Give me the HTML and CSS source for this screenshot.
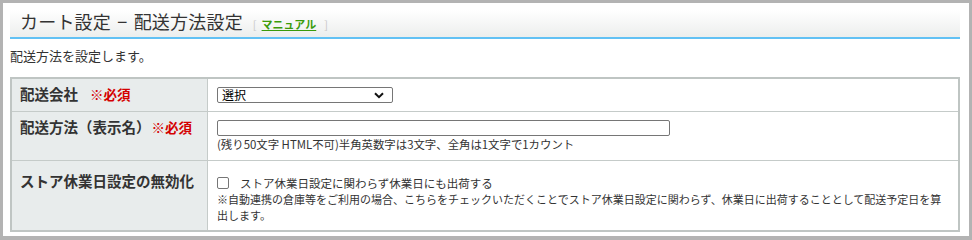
FILE: index.html
```html
<!DOCTYPE html>
<html lang="ja">
<head>
<meta charset="utf-8">
<title>カート設定 − 配送方法設定</title>
<link rel="stylesheet" href="styles.css">
</head>
<body>
<div class="page">
  <div class="head">
    <h1 class="title">カート設定 − 配送方法設定</h1>
    <span class="manual"><span class="br">[</span><a class="manual-link" href="#">マニュアル</a><span class="br">]</span></span>
  </div>
  <p class="desc">配送方法を設定します。</p>
  <table class="form">
    <tr class="row row-1">
      <th class="label">配送会社<span class="req">※必須</span></th>
      <td class="value">
        <span class="select-wrap">
          <select class="select"><option>選択</option></select>
          <svg class="chev" width="10" height="7" viewBox="0 0 10 7"><path d="M1 1.2 L5 5.2 L9 1.2" fill="none" stroke="#111" stroke-width="2"/></svg>
        </span>
      </td>
    </tr>
    <tr class="row row-2">
      <th class="label">配送方法（表示名）<span class="req req-2">※必須</span></th>
      <td class="value">
        <input class="text" type="text">
        <div class="hint">(残り50文字 HTML不可)半角英数字は3文字、全角は1文字で1カウント</div>
      </td>
    </tr>
    <tr class="row row-3">
      <th class="label label-3">ストア休業日設定の無効化</th>
      <td class="value">
        <label class="check-line"><input class="check" type="checkbox"><span>ストア休業日設定に関わらず休業日にも出荷する</span></label>
        <div class="note">※自動連携の倉庫等をご利用の場合、こちらをチェックいただくことでストア休業日設定に関わらず、休業日に出荷することとして配送予定日を算出します。</div>
      </td>
    </tr>
  </table>
</div>
</body>
</html>
```

FILE: styles.css
```css
html, body {
  margin: 0;
  padding: 0;
  background: #fff;
}
body {
  font-family: "Noto Sans CJK JP", "Noto Sans", sans-serif;
  color: #333;
}
.page {
  box-sizing: border-box;
  width: 972px;
  height: 240px;
  overflow: hidden;
  border-style: solid;
  border-color: #b3b3b3;
  border-width: 3px 3px 4px 3px;
  padding: 7px 9px 0 7px;
}
.head {
  height: 27px;
  border-bottom: 2px solid #62c1f4;
  background: linear-gradient(#ffffff, #eceeed);
  display: flex;
  align-items: baseline;
  padding-left: 10px;
}
.title {
  margin: 0;
  font-size: 18px;
  font-weight: normal;
  line-height: 23px;
  color: #333;
  word-spacing: 2px;
  letter-spacing: 0.2px;
}
.manual {
  margin-left: 10px;
  font-size: 11px;
  display: flex;
  align-items: baseline;
}
.br {
  color: #c8c8c8;
  font-size: 11px;
}
.manual-link {
  color: #3a9b0a;
  font-weight: bold;
  text-decoration: underline;
  margin: 0 8px 0 5px;
}
.desc {
  margin: 8px 0 12px 0;
  font-size: 13px;
  line-height: 18px;
  color: #333;
}
.form {
  width: 950px;
  border: 2px solid #bfc5c3;
  border-collapse: separate;
  border-spacing: 0;
}
.label {
  width: 187px;
  background: #e8ecec;
  border-right: 1px solid #c5cbc9;
  border-bottom: 1px solid #c5cbc9;
  text-align: left;
  vertical-align: top;
  padding: 5px 0 0 8px;
  font-size: 14.5px;
  line-height: 20px;
  font-weight: bold;
  color: #333;
  white-space: nowrap;
}
.label-3 {
  padding-top: 10px;
}
.req {
  color: #d40000;
  margin-left: 12px;
  font-size: 13.5px;
}
.req-2 {
  margin-left: 1px;
}
.value {
  border-bottom: 1px solid #c5cbc9;
  vertical-align: top;
  padding: 8px 9px 7px 9px;
  font-size: 11px;
  color: #333;
}
.row-3 .label, .row-3 .value {
  border-bottom: none;
}
.row-1 .value {
  padding-bottom: 8px;
}
.select-wrap {
  position: relative;
  display: inline-block;
  vertical-align: top;
}
.select {
  appearance: none;
  -webkit-appearance: none;
  box-sizing: border-box;
  width: 176px;
  height: 16px;
  border: 1px solid #767676;
  border-radius: 2px;
  background: #fff;
  padding: 0 0 0 4px;
  margin: 0;
  font-family: "Noto Sans CJK JP", sans-serif;
  font-size: 12px;
  line-height: 14px;
  color: #000;
  display: block;
}
.chev {
  position: absolute;
  right: 9px;
  top: 5px;
  pointer-events: none;
}
.text {
  box-sizing: border-box;
  display: block;
  width: 453px;
  height: 16px;
  margin: 0;
  padding: 0 3px;
  border: 1px solid #767676;
  border-radius: 2px;
  background: #fff;
}
.hint {
  line-height: 17px;
  font-size: 11.4px;
}
.check-line {
  display: flex;
  align-items: center;
  height: 16px;
  margin-top: 6px;
  font-size: 11.5px;
}
.check {
  appearance: none;
  -webkit-appearance: none;
  box-sizing: border-box;
  width: 12px;
  height: 12px;
  margin: 0 11px 0 0;
  border: 1px solid #767676;
  border-radius: 2px;
  background: #fff;
}
.note {
  font-size: 11px;
  line-height: 16px;
}
```
